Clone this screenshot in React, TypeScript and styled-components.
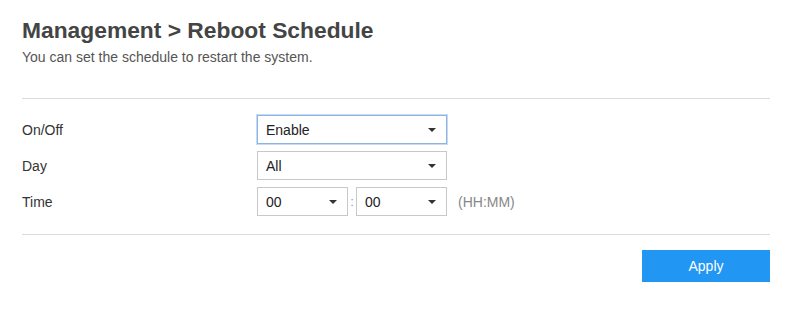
import { FC } from 'react'
import styled, { createGlobalStyle } from 'styled-components'

const GlobalStyle = createGlobalStyle`
  html, body {
    margin: 0;
    padding: 0;
    background: #fff;
  }
  body {
    font-family: 'Liberation Sans', Arial, sans-serif;
    color: #333;
  }
`

const rows = [
  { label: 'On/Off', kind: 'single', value: 'Enable', focused: true },
  { label: 'Day', kind: 'single', value: 'All', focused: false },
  { label: 'Time', kind: 'time', value: '00', focused: false }
]

const App: FC = () => {
  return (
    <Page>
      <GlobalStyle />
      <Title>Management &gt; Reboot Schedule</Title>
      <Subtitle>You can set the schedule to restart the system.</Subtitle>
      <Divider />
      <Form>
        {rows.map((row) => (
          <Row key={row.label}>
            <Label>{row.label}</Label>
            {row.kind === 'single' ? (
              <Select width={190} focused={row.focused}>
                <span>{row.value}</span>
                <Caret />
              </Select>
            ) : (
              <TimeGroup>
                <Select width={91}>
                  <span>00</span>
                  <Caret />
                </Select>
                <Colon>:</Colon>
                <Select width={91}>
                  <span>00</span>
                  <Caret />
                </Select>
                <Hint>(HH:MM)</Hint>
              </TimeGroup>
            )}
          </Row>
        ))}
      </Form>
      <Divider />
      <Actions>
        <ApplyButton>Apply</ApplyButton>
      </Actions>
    </Page>
  )
}

const Page = styled.div`
  width: 748px;
  padding: 15px 31px 0 22px;
  display: flex;
  flex-direction: column;
`

const Title = styled.h1`
  margin: 0;
  font-size: 22.8px;
  line-height: 30px;
  font-weight: bold;
  color: #444;
`

const Subtitle = styled.p`
  margin: 4px 0 0 0;
  font-size: 14px;
  line-height: 17px;
  color: #555;
`

const Divider = styled.div`
  height: 1px;
  background: #dcdcdc;
  margin-top: 32px;
`

const Form = styled.div`
  display: flex;
  flex-direction: column;
  gap: 7px;
  padding-top: 16px;
  margin-bottom: -14px;
`

const Row = styled.div`
  display: flex;
  align-items: center;
  height: 29px;
`

const Label = styled.div`
  width: 235px;
  font-size: 14px;
  color: #333;
`

const Select = styled.div<{ width: number; focused?: boolean }>`
  box-sizing: border-box;
  width: ${(p) => p.width}px;
  height: 29px;
  display: flex;
  align-items: center;
  justify-content: space-between;
  padding: 0 8px 0 8px;
  border: 1px solid ${(p) => (p.focused ? '#8fb3e0' : '#c8c8c8')};
  box-shadow: ${(p) => (p.focused ? '0 0 0 1px #c7dbf3' : 'none')};
  background: #fff;
  font-size: 14px;
  color: #222;
`

const Caret = styled.i`
  width: 0;
  height: 0;
  border-left: 4px solid transparent;
  border-right: 4px solid transparent;
  border-top: 4px solid #333;
  margin-right: 2px;
`

const TimeGroup = styled.div`
  display: flex;
  align-items: center;
`

const Colon = styled.span`
  width: 8px;
  text-align: center;
  font-size: 13px;
  color: #999;
`

const Hint = styled.span`
  margin-left: 11px;
  font-size: 14px;
  color: #888;
`

const Actions = styled.div`
  display: flex;
  justify-content: flex-end;
  padding-top: 15px;
`

const ApplyButton = styled.button`
  width: 128px;
  height: 32px;
  border: none;
  background: #2196f3;
  color: #fff;
  font-family: 'Liberation Sans', Arial, sans-serif;
  font-size: 14px;
  cursor: pointer;
`

export default App
